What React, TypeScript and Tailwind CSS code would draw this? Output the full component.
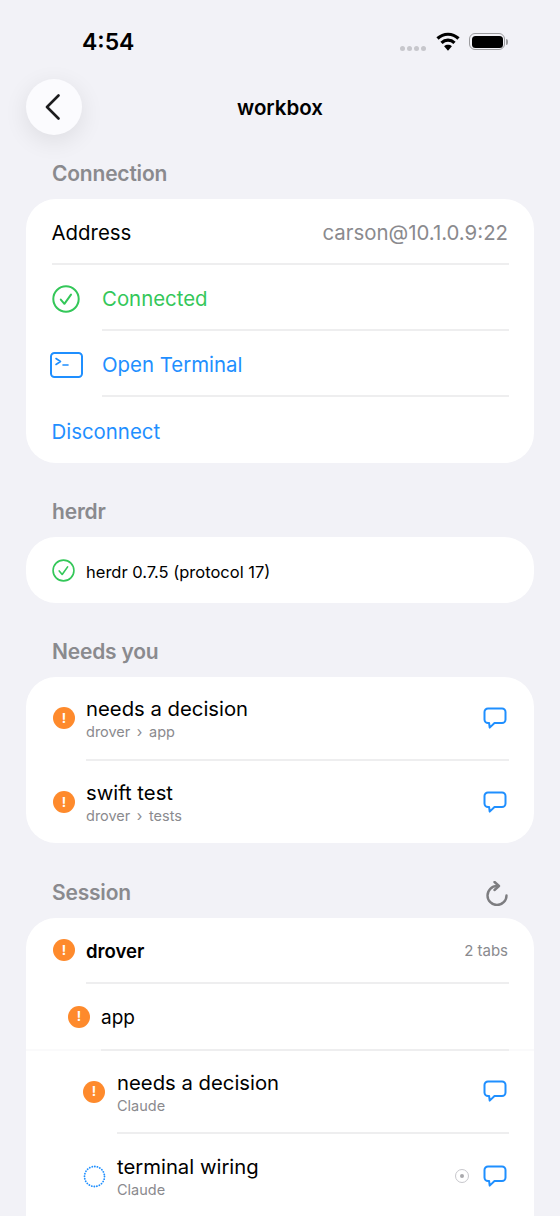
import type { ReactNode } from "react";

const font = { fontFamily: "Inter" };

const Warning = () => (
  <span className="flex h-[22px] w-[22px] shrink-0 items-center justify-center rounded-full bg-[#fe8a2c] text-[13px] font-bold leading-none text-white">
    !
  </span>
);

const CheckCircle = ({ size }: { size: number }) => (
  <svg width={size} height={size} viewBox="0 0 28 28" fill="none" stroke="#34c759" strokeLinecap="round" strokeLinejoin="round" className="shrink-0">
    <circle cx="14" cy="14" r="12.700" strokeWidth="2" />
    <path d="M8.800 14.600l3.600 4.200 6.600-9.200" strokeWidth="2" />
  </svg>
);

const Bubble = () => (
  <svg width="24" height="23" viewBox="0 0 24 23" fill="none" stroke="#1f8fff" strokeWidth="2" strokeLinejoin="round" className="shrink-0">
    <path d="M5 1.500h14a3.500 3.500 0 0 1 3.500 3.500v7.500a3.500 3.500 0 0 1-3.500 3.500h-7.500l-4.800 4.600-.6-4.600H5a3.500 3.500 0 0 1-3.500-3.500V5A3.500 3.500 0 0 1 5 1.500z" />
  </svg>
);

const Terminal = () => (
  <svg width="33" height="26" viewBox="0 0 33 26" fill="none" stroke="#1f8fff" strokeLinecap="round" strokeLinejoin="round" className="shrink-0">
    <rect x="1" y="1" width="31" height="24" rx="3.500" strokeWidth="2" />
    <path d="M6 6.500l4.500 3-4.500 3" strokeWidth="1.600" />
    <path d="M13 13h5" strokeWidth="1.600" />
  </svg>
);

const SectionLabel = ({ children }: { children: ReactNode }) => (
  <h2 className="text-[21px] font-semibold leading-[26px] tracking-[-0.2px] text-[#8a8a8e]">{children}</h2>
);

const Divider = ({ className }: { className: string }) => (
  <div className={`h-[2px] bg-[#eeeeef] ${className}`} />
);

const Card = ({ children, className = "" }: { children: ReactNode; className?: string }) => (
  <div className={`overflow-hidden rounded-[30px] bg-white ${className}`}>{children}</div>
);

const ThreadRow = ({
  rowClass,
  textClass = "",
  title,
  sub,
  icon,
  extra,
  divider,
}: {
  rowClass: string;
  textClass?: string;
  title: string;
  sub: string;
  icon: ReactNode;
  extra?: ReactNode;
  divider?: string;
}) => (
  <>
    <div className={`flex items-center pr-[27px] ${rowClass}`}>
      <div className="flex w-[34px] shrink-0 items-center">{icon}</div>
      <div className={`flex-1 ${textClass}`}>
        <div className="text-[20.300px] leading-[26px] text-black">{title}</div>
        <div className="mt-[1px] text-[14.500px] leading-[18px] text-[#8a8a8e] [word-spacing:2.500px]">{sub}</div>
      </div>
      {extra}
      <Bubble />
    </div>
    {divider && <Divider className={`mr-[25px] ${divider}`} />}
  </>
);

const App = () => {
  return (
    <div className="h-[1216px] w-[560px] overflow-hidden bg-[#f2f2f7] px-[26px]" style={font}>
      <div className="flex h-[79px] items-start justify-between pl-[56px] pr-[26px] pt-[28px]">
        <span className="text-[23px] font-semibold leading-[28px] text-black">4:54</span>
        <div className="flex items-center pt-[4px]">
          <div className="mt-[13px] flex gap-[2px]">
            <span className="h-[5px] w-[5px] rounded-full bg-[#c7c7cc]" />
            <span className="h-[5px] w-[5px] rounded-full bg-[#c7c7cc]" />
            <span className="h-[5px] w-[5px] rounded-full bg-[#c7c7cc]" />
            <span className="h-[5px] w-[5px] rounded-full bg-[#c7c7cc]" />
          </div>
          <svg width="24" height="19" viewBox="0 0 24 19" fill="none" stroke="#000" strokeWidth="3.200" className="ml-[10px]">
            <path d="M1.500 6.500C7.500 .8 16.500 .8 22.500 6.500" />
            <path d="M5.500 10.800C9.200 7.200 14.800 7.200 18.500 10.800" />
            <path d="M12 18.800l-3.900-4.600c2.300-1.900 5.500-1.900 7.800 0z" fill="#000" stroke="none" />
          </svg>
          <div className="ml-[9px] flex items-center">
            <div className="h-[17px] w-[36px] rounded-[6px] border-[1.500px] border-[#9c9c9f] p-[1.500px]">
              <div className="h-full w-full rounded-[3.500px] bg-black" />
            </div>
            <div className="ml-[1px] h-[6px] w-[2px] rounded-r-full bg-[#9c9c9f]" />
          </div>
        </div>
      </div>

      <div className="relative flex h-[56px] items-center justify-center">
        <button className="absolute left-0 top-0 flex h-[56px] w-[56px] items-center justify-center rounded-full bg-[#fbfbfe] shadow-[0_6px_24px_rgba(0,0,0,0.09)]">
          <svg width="16" height="26" viewBox="0 0 16 26" fill="none" stroke="#1c1c1e" strokeWidth="2.600" strokeLinecap="round" strokeLinejoin="round" className="mr-[3px]">
            <path d="M13.500 1.500L2 13l11.500 11.500" />
          </svg>
        </button>
        <span className="pt-[1px] text-[20.500px] font-semibold leading-[26px] text-black">workbox</span>
      </div>

      <div className="mt-[26px] pl-[26px]">
        <SectionLabel>Connection</SectionLabel>
      </div>
      <Card className="mt-[12px]">
        <div className="flex h-[64px] items-center justify-between pl-[25.500px] pr-[26px] pt-[4px] text-[20.400px]">
          <span className="text-black">Address</span>
          <span className="text-[#8a8a8e]">carson@10.1.0.9:22</span>
        </div>
        <Divider className="ml-[26px] mr-[25px]" />
        <div className="flex h-[64px] items-center pl-[26px] pt-[4px] text-[20.400px] text-[#34c759]">
          <div className="w-[50px]">
            <CheckCircle size={28} />
          </div>
          <span className="pt-[1px]">Connected</span>
        </div>
        <Divider className="ml-[76px] mr-[25px]" />
        <div className="flex h-[64px] items-center pl-[24px] pt-[4px] text-[20.400px] text-[#1f8fff]">
          <div className="w-[52px]">
            <Terminal />
          </div>
          <span className="pt-[1px]">Open Terminal</span>
        </div>
        <Divider className="ml-[76px] mr-[25px]" />
        <div className="flex h-[66px] items-center pl-[25.500px] pt-[4px] text-[20.400px] text-[#1f8fff]">Disconnect</div>
      </Card>

      <div className="mt-[36px] pl-[26px]">
        <SectionLabel>herdr</SectionLabel>
      </div>
      <Card className="mt-[12px]">
        <div className="flex h-[66px] items-center pl-[26px]">
          <div className="w-[34px]">
            <CheckCircle size={23} />
          </div>
          <span className="pt-[4px] text-[16.500px] text-black">herdr 0.7.5 (protocol 17)</span>
        </div>
      </Card>

      <div className="mt-[36px] pl-[26px]">
        <SectionLabel>Needs you</SectionLabel>
      </div>
      <Card className="mt-[12px]">
        <ThreadRow rowClass="h-[82px] pl-[27px]" textClass="-ml-[1px]" title="needs a decision" sub="drover › app" icon={<Warning />} divider="ml-[60px]" />
        <ThreadRow rowClass="h-[82px] pl-[27px]" textClass="-ml-[1px]" title="swift test" sub="drover › tests" icon={<Warning />} />
      </Card>

      <div className="mt-[37px] flex items-center justify-between px-[26px]">
        <SectionLabel>Session</SectionLabel>
        <svg width="22" height="25" viewBox="0 0 22 25" fill="none" stroke="#7d7d80" strokeWidth="2.400" strokeLinecap="round" strokeLinejoin="round">
          <path d="M11 5a9.500 9.500 0 1 0 9.500 9.500" />
          <path d="M8.500 1l4.500 4-4.500 4" />
        </svg>
      </div>
      <Card className="mt-[12px] rounded-b-none">
        <div className="flex h-[64px] items-center pl-[27px] pr-[26px]">
          <div className="w-[33px]">
            <Warning />
          </div>
          <span className="flex-1 pt-[4px] text-[18.600px] font-semibold text-black">drover</span>
          <span className="pt-[2px] text-[15px] text-[#8a8a8e]">2 tabs</span>
        </div>
        <Divider className="ml-[60px] mr-[25px]" />
        <div className="flex h-[65px] items-center pl-[42px]">
          <div className="w-[33px]">
            <Warning />
          </div>
          <span className="pt-[4px] text-[19px] text-black">app</span>
        </div>
        <div className="bg-[#fafafb]">
          <Divider className="ml-[75px] mr-[25px]" />
        </div>
        <ThreadRow rowClass="h-[81px] pl-[57px]" textClass="pt-[2px]" title="needs a decision" sub="Claude" icon={<Warning />} divider="ml-[91px]" />
        <ThreadRow
          rowClass="h-[82px] pl-[57px] pt-[2px]"
          title="terminal wiring"
          sub="Claude"
          icon={
            <svg width="23" height="23" viewBox="0 0 23 23" fill="none" stroke="#1f8fff" strokeWidth="1.800" strokeLinecap="round" strokeDasharray="0.1 2.518">
              <circle cx="11.500" cy="11.500" r="10" />
            </svg>
          }
          extra={
            <div className="mr-[14px] flex h-[14px] w-[14px] items-center justify-center rounded-full border border-[#c7c7cc]">
              <div className="h-[4px] w-[4px] rounded-full bg-[#a9a9ad]" />
            </div>
          }
        />
      </Card>
    </div>
  );
};

export default App;
